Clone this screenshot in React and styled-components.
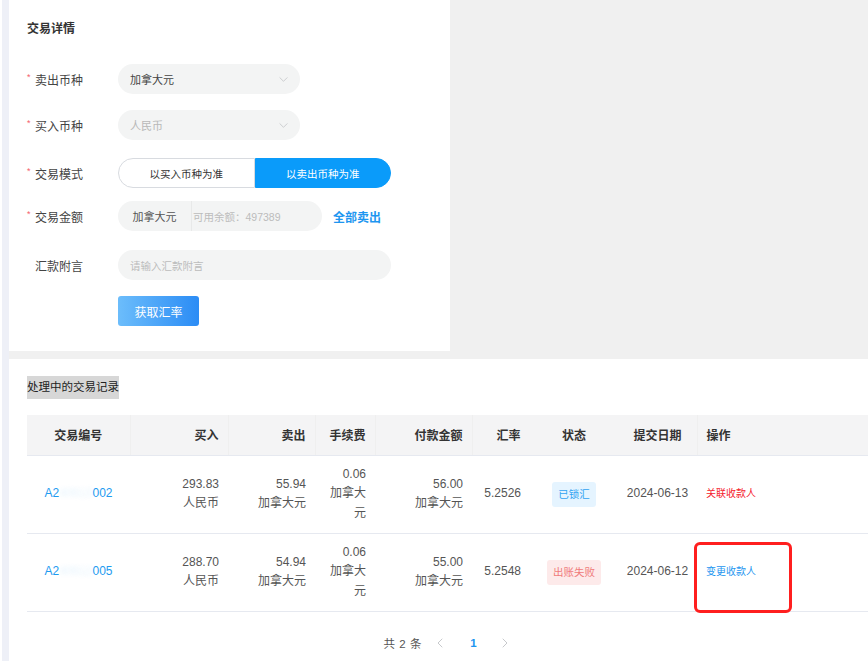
import React from "react";
import styled, { createGlobalStyle } from "styled-components";

const GlobalStyle = createGlobalStyle`
  html, body { margin: 0; padding: 0; }
  body {
    font-family: "Liberation Sans", "Noto Sans CJK SC", sans-serif;
    color: #444;
    background: #f0f0f0;
  }
  * { box-sizing: border-box; }
`;

const Page = styled.div`
  display: flex;
  width: 868px;
  height: 661px;
  overflow: hidden;
  background: #f0f0f0;
`;

const Rail = styled.div`
  width: 9px;
  flex-shrink: 0;
  border-left: 2px solid #ffffff;
  background: #eef0f7;
`;

const Main = styled.div`
  flex: 1;
  display: flex;
  flex-direction: column;
  gap: 8px;
  min-width: 0;
`;

const FormPanel = styled.section`
  width: 441px;
  height: 351px;
  flex-shrink: 0;
  background: #fff;
  padding: 0 18px;
`;

const PanelTitle = styled.h2`
  margin: 0;
  height: 54px;
  display: flex;
  align-items: center;
  font-size: 12px;
  font-weight: 700;
  color: #333;
`;

const FormRow = styled.div`
  display: flex;
  align-items: center;
  height: 30px;
  margin-top: ${(p) => p.$mt}px;
`;

const Label = styled.div`
  width: 91px;
  flex-shrink: 0;
  display: flex;
  align-items: center;
  font-size: 12px;
  color: #444;
`;

const Star = styled.span`
  width: 8px;
  color: #f5606b;
  font-size: 9px;
  margin-top: -4px;
`;

const Select = styled.div`
  width: 182px;
  height: 30px;
  border-radius: 15px;
  background: #f3f4f4;
  display: flex;
  align-items: center;
  justify-content: space-between;
  padding: 0 12px 0 12px;
  font-size: 11px;
  color: ${(p) => (p.$muted ? "#b8b8b8" : "#444")};
`;

const Toggle = styled.div`
  display: flex;
  width: 273px;
  height: 30px;
`;

const ToggleOption = styled.div`
  flex: 1;
  display: flex;
  align-items: center;
  justify-content: center;
  font-size: 10.5px;
  color: ${(p) => (p.$active ? "#fff" : "#333")};
  background: ${(p) => (p.$active ? "#0a9bfa" : "#fff")};
  border: 1px solid ${(p) => (p.$active ? "#0a9bfa" : "#d8dbe0")};
  border-radius: ${(p) => (p.$side === "left" ? "15px 0 0 15px" : "0 15px 15px 0")};
`;

const AmountBox = styled.div`
  width: 204px;
  height: 30px;
  border-radius: 15px;
  background: #f3f4f4;
  display: flex;
  align-items: stretch;
  font-size: 11px;
`;

const Prefix = styled.div`
  width: 74px;
  display: flex;
  align-items: center;
  justify-content: center;
  color: #555;
  border-right: 1px solid #e8e9e9;
`;

const Placeholder = styled.div`
  display: flex;
  align-items: center;
  padding-left: ${(p) => p.$pl}px;
  color: #bcbcbc;
  font-size: ${(p) => p.$fs || 11}px;
`;

const TextBox = styled.div`
  width: 273px;
  height: 30px;
  border-radius: 15px;
  background: #f3f4f4;
  display: flex;
`;

const SellAll = styled.span`
  margin-left: 11px;
  font-size: 12px;
  font-weight: 700;
  color: #1e96f0;
`;

const PrimaryButton = styled.button`
  width: 81px;
  height: 30px;
  margin-left: 91px;
  border: none;
  border-radius: 3px;
  background: linear-gradient(90deg, #6cbdfb 0%, #2b8cf5 100%);
  color: #fff;
  font-family: inherit;
  font-size: 12px;
  padding: 0;
`;

const RecordPanel = styled.section`
  flex: 1;
  background: #fff;
  padding: 17px 0 0 18px;
  min-width: 0;
`;

const RecordTitle = styled.h2`
  display: inline-block;
  margin: 0;
  height: 23px;
  line-height: 23px;
  font-size: 11.5px;
  font-weight: 400;
  color: #222;
  background: #d7d7d7;
`;

const Table = styled.table`
  margin-top: 16px;
  width: 841px;
  border-collapse: collapse;
  table-layout: fixed;
  font-size: 12px;
`;

const Th = styled.th`
  height: 40px;
  background: #f4f4f5;
  font-weight: 700;
  color: #333;
  padding: 0 9px;
  white-space: nowrap;
  text-align: ${(p) => p.$align || "left"};
  border-bottom: 1px solid #e6e9f0;
  border-right: 1px solid ${(p) => (p.$sep ? "#efefef" : "transparent")};
`;

const Td = styled.td`
  height: 78px;
  padding: 0 ${(p) => (p.$tight ? 0 : 9)}px;
  color: #555;
  line-height: 19.5px;
  text-align: ${(p) => p.$align || "left"};
  white-space: ${(p) => (p.$tight ? "nowrap" : "normal")};
  vertical-align: middle;
  border-bottom: 1px solid #e6e9f0;
  position: relative;
`;

const IdLink = styled.a`
  color: #1e9bf0;
  text-decoration: none;
`;

const Masked = styled.span`
  color: transparent;
  text-shadow: 0 0 5px rgba(30, 155, 240, 0.12);
`;

const Tag = styled.span`
  display: inline-block;
  height: 25px;
  line-height: 25px;
  padding: 0 6px;
  border-radius: 3px;
  font-size: 10.5px;
  color: ${(p) => (p.$tone === "fail" ? "#f07a7a" : "#31a3f2")};
  background: ${(p) => (p.$tone === "fail" ? "#fdeaea" : "#e5f4ff")};
`;

const ActionLink = styled.a`
  display: inline-block;
  margin-top: -4px;
  font-size: 10px;
  color: ${(p) => (p.$tone === "danger" ? "#f5222d" : "#1e96f0")};
  text-decoration: none;
`;

const Highlight = styled.div`
  position: absolute;
  left: -3px;
  top: 8px;
  width: 98px;
  height: 71px;
  border: 3px solid #ff1f1f;
  border-radius: 6px;
  pointer-events: none;
`;

const Pagination = styled.div`
  width: 841px;
  display: flex;
  align-items: center;
  justify-content: center;
  margin-top: 20px;
  padding-left: 10px;
  height: 22px;
  font-size: 11.5px;
  color: #555;
`;

const Total = styled.span`
  margin-right: 4px;
  word-spacing: 1px;
`;

const PageBtn = styled.span`
  width: 32px;
  display: flex;
  justify-content: center;
  color: ${(p) => (p.$active ? "#1e96f0" : "#c0c4cc")};
  font-weight: ${(p) => (p.$active ? 700 : 400)};
`;

const Chevron = ({ dir = "down", size = 9, color = "#c7c9cc" }) => {
  const paths = {
    down: "M1 3 L5 7 L9 3",
    left: "M6 1 L2 5 L6 9",
    right: "M3 1 L7 5 L3 9",
  };
  return (
    <svg width={size} height={size} viewBox="0 0 10 10" fill="none">
      <path d={paths[dir]} stroke={color} strokeWidth="1" strokeLinecap="round" strokeLinejoin="round" />
    </svg>
  );
};

const rows = [
  {
    idHead: "A2",
    idMask: "40613",
    idTail: "002",
    buy: "293.83",
    sell: "55.94",
    fee: "0.06",
    pay: "56.00",
    rate: "5.2526",
    status: "已锁汇",
    tone: "ok",
    date: "2024-06-13",
    action: "关联收款人",
    actionTone: "danger",
  },
  {
    idHead: "A2",
    idMask: "40612",
    idTail: "005",
    buy: "288.70",
    sell: "54.94",
    fee: "0.06",
    pay: "55.00",
    rate: "5.2548",
    status: "出账失败",
    tone: "fail",
    date: "2024-06-12",
    action: "变更收款人",
    actionTone: "link",
    highlight: true,
  },
];

export default function App() {
  return (
    <>
      <GlobalStyle />
      <Page>
        <Rail />
        <Main>
          <FormPanel>
            <PanelTitle>交易详情</PanelTitle>
            <FormRow $mt={10}>
              <Label><Star>*</Star>卖出币种</Label>
              <Select>加拿大元<Chevron /></Select>
            </FormRow>
            <FormRow $mt={16}>
              <Label><Star>*</Star>买入币种</Label>
              <Select $muted>人民币<Chevron /></Select>
            </FormRow>
            <FormRow $mt={18}>
              <Label><Star>*</Star>交易模式</Label>
              <Toggle>
                <ToggleOption $side="left">以买入币种为准</ToggleOption>
                <ToggleOption $side="right" $active>以卖出币种为准</ToggleOption>
              </Toggle>
            </FormRow>
            <FormRow $mt={13}>
              <Label><Star>*</Star>交易金额</Label>
              <AmountBox>
                <Prefix>加拿大元</Prefix>
                <Placeholder $pl={1} $fs={10.5}>可用余额：497389</Placeholder>
              </AmountBox>
              <SellAll>全部卖出</SellAll>
            </FormRow>
            <FormRow $mt={19}>
              <Label><Star />汇款附言</Label>
              <TextBox>
                <Placeholder $pl={12} $fs={10.5}>请输入汇款附言</Placeholder>
              </TextBox>
            </FormRow>
            <FormRow $mt={16}>
              <PrimaryButton>获取汇率</PrimaryButton>
            </FormRow>
          </FormPanel>

          <RecordPanel>
            <RecordTitle>处理中的交易记录</RecordTitle>
            <Table>
              <colgroup>
                <col style={{ width: 103 }} />
                <col style={{ width: 98 }} />
                <col style={{ width: 87 }} />
                <col style={{ width: 60 }} />
                <col style={{ width: 97 }} />
                <col style={{ width: 58 }} />
                <col style={{ width: 88 }} />
                <col style={{ width: 79 }} />
                <col />
              </colgroup>
              <thead>
                <tr>
                  <Th $align="center" $sep>交易编号</Th>
                  <Th $align="right" $sep>买入</Th>
                  <Th $align="right" $sep>卖出</Th>
                  <Th $align="right" $sep>手续费</Th>
                  <Th $align="right" $sep>付款金额</Th>
                  <Th $align="right">汇率</Th>
                  <Th $align="center">状态</Th>
                  <Th $align="center" $sep>提交日期</Th>
                  <Th>操作</Th>
                </tr>
              </thead>
              <tbody>
                {rows.map((r) => (
                  <tr key={r.date}>
                    <Td $align="center">
                      <IdLink>
                        {r.idHead}
                        <Masked>{r.idMask}</Masked>
                        {r.idTail}
                      </IdLink>
                    </Td>
                    <Td $align="right">{r.buy}<br />人民币</Td>
                    <Td $align="right">{r.sell}<br />加拿大元</Td>
                    <Td $align="right">{r.fee}<br />加拿大元</Td>
                    <Td $align="right">{r.pay}<br />加拿大元</Td>
                    <Td $align="right">{r.rate}</Td>
                    <Td $align="center"><Tag $tone={r.tone}>{r.status}</Tag></Td>
                    <Td $align="center" $tight>{r.date}</Td>
                    <Td>
                      <ActionLink $tone={r.actionTone}>{r.action}</ActionLink>
                      {r.highlight && <Highlight />}
                    </Td>
                  </tr>
                ))}
              </tbody>
            </Table>
            <Pagination>
              <Total>共 2 条</Total>
              <PageBtn><Chevron dir="left" size={10} /></PageBtn>
              <PageBtn $active>1</PageBtn>
              <PageBtn><Chevron dir="right" size={10} /></PageBtn>
            </Pagination>
          </RecordPanel>
        </Main>
      </Page>
    </>
  );
}
